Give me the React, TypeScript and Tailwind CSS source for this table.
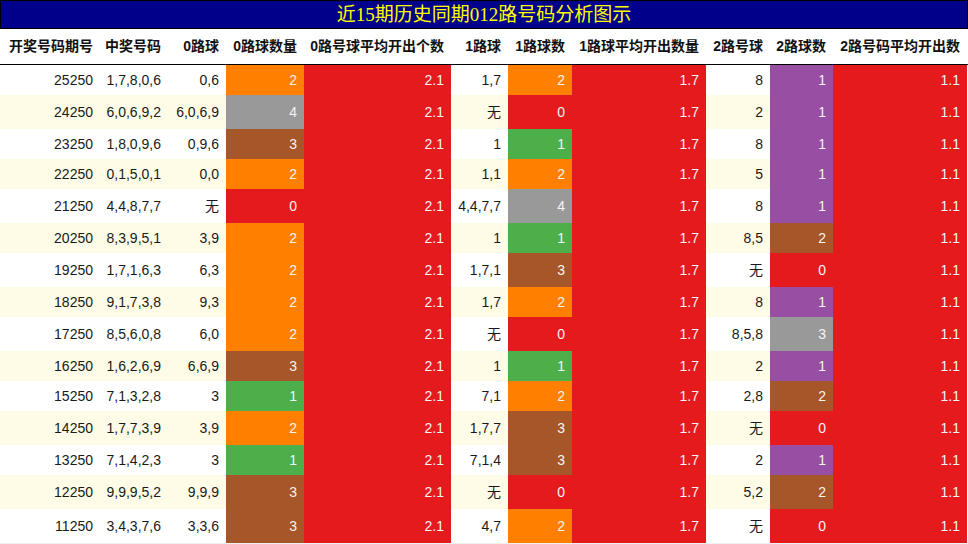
import React from "react";

type Row = [string, string, string, number, string, number, string, number];

const rows: Row[] = [
  ["25250", "1,7,8,0,6", "0,6", 2, "1,7", 2, "8", 1],
  ["24250", "6,0,6,9,2", "6,0,6,9", 4, "无", 0, "2", 1],
  ["23250", "1,8,0,9,6", "0,9,6", 3, "1", 1, "8", 1],
  ["22250", "0,1,5,0,1", "0,0", 2, "1,1", 2, "5", 1],
  ["21250", "4,4,8,7,7", "无", 0, "4,4,7,7", 4, "8", 1],
  ["20250", "8,3,9,5,1", "3,9", 2, "1", 1, "8,5", 2],
  ["19250", "1,7,1,6,3", "6,3", 2, "1,7,1", 3, "无", 0],
  ["18250", "9,1,7,3,8", "9,3", 2, "1,7", 2, "8", 1],
  ["17250", "8,5,6,0,8", "6,0", 2, "无", 0, "8,5,8", 3],
  ["16250", "1,6,2,6,9", "6,6,9", 3, "1", 1, "2", 1],
  ["15250", "7,1,3,2,8", "3", 1, "7,1", 2, "2,8", 2],
  ["14250", "1,7,7,3,9", "3,9", 2, "1,7,7", 3, "无", 0],
  ["13250", "7,1,4,2,3", "3", 1, "7,1,4", 3, "2", 1],
  ["12250", "9,9,9,5,2", "9,9,9", 3, "无", 0, "5,2", 2],
  ["11250", "3,4,3,7,6", "3,3,6", 3, "4,7", 2, "无", 0],
];

const c01: Record<number, string> = {
  0: "bg-[#e41a1c]",
  1: "bg-[#4daf4a]",
  2: "bg-[#ff7f00]",
  3: "bg-[#a65628]",
  4: "bg-[#999999]",
};
const c2: Record<number, string> = {
  0: "bg-[#e41a1c]",
  1: "bg-[#984ea3]",
  2: "bg-[#a65628]",
  3: "bg-[#999999]",
};

const headers = [
  "开奖号码期号",
  "中奖号码",
  "0路球",
  "0路球数量",
  "0路号球平均开出个数",
  "1路球",
  "1路球数",
  "1路球平均开出数量",
  "2路号球",
  "2路球数",
  "2路号码平均开出数",
];

const grid =
  "grid grid-cols-[100px_68px_58px_78px_147px_57px_64px_134px_64px_63px_134px]";

export default function App() {
  return (
    <div
      className="w-[968px] h-[544px] bg-[#f0f0f0] overflow-hidden"
      style={{ fontFamily: '"Liberation Sans", "Noto Sans CJK SC", sans-serif' }}
    >
      <div className="w-[968px] bg-white">
        <div
          className="h-[29px] border border-black bg-[#00008b] text-[#ffff00] text-[19px] leading-[27px] text-center"
          style={{ fontFamily: '"Liberation Serif", "Noto Sans CJK SC", serif' }}
        >
          近15期历史同期012路号码分析图示
        </div>
        <div className={`${grid} h-[36px] border-b border-black font-bold text-[14px] text-[#111]`}>
          {headers.map((h) => (
            <div key={h} className="flex items-center justify-end pr-[7px] whitespace-nowrap">
              {h}
            </div>
          ))}
        </div>
        {rows.map((r, i) => {
          const tall = r.some((v) => v === "无");
          const bg = i % 2 === 0 ? "bg-white" : "bg-[#fefce6]";
          const plain = `${bg} flex items-center justify-end pr-[7px] text-[#1a1a1a]`;
          const col = "flex items-center justify-end pr-[7px] text-[#f4f4f4]";
          return (
            <div
              key={r[0]}
              className={`${grid} ${tall ? "h-[34px]" : "h-[30px]"} text-[14px] whitespace-nowrap`}
            >
              <div className={plain}>{r[0]}</div>
              <div className={plain}>{r[1]}</div>
              <div className={plain}>{r[2]}</div>
              <div className={`${col} ${c01[r[3]]}`}>{r[3]}</div>
              <div className={`${col} bg-[#e41a1c]`}>2.1</div>
              <div className={plain}>{r[4]}</div>
              <div className={`${col} ${c01[r[5]]}`}>{r[5]}</div>
              <div className={`${col} bg-[#e41a1c]`}>1.7</div>
              <div className={plain}>{r[6]}</div>
              <div className={`${col} ${c2[r[7]]}`}>{r[7]}</div>
              <div className={`${col} bg-[#e41a1c]`}>1.1</div>
            </div>
          );
        })}
      </div>
    </div>
  );
}
